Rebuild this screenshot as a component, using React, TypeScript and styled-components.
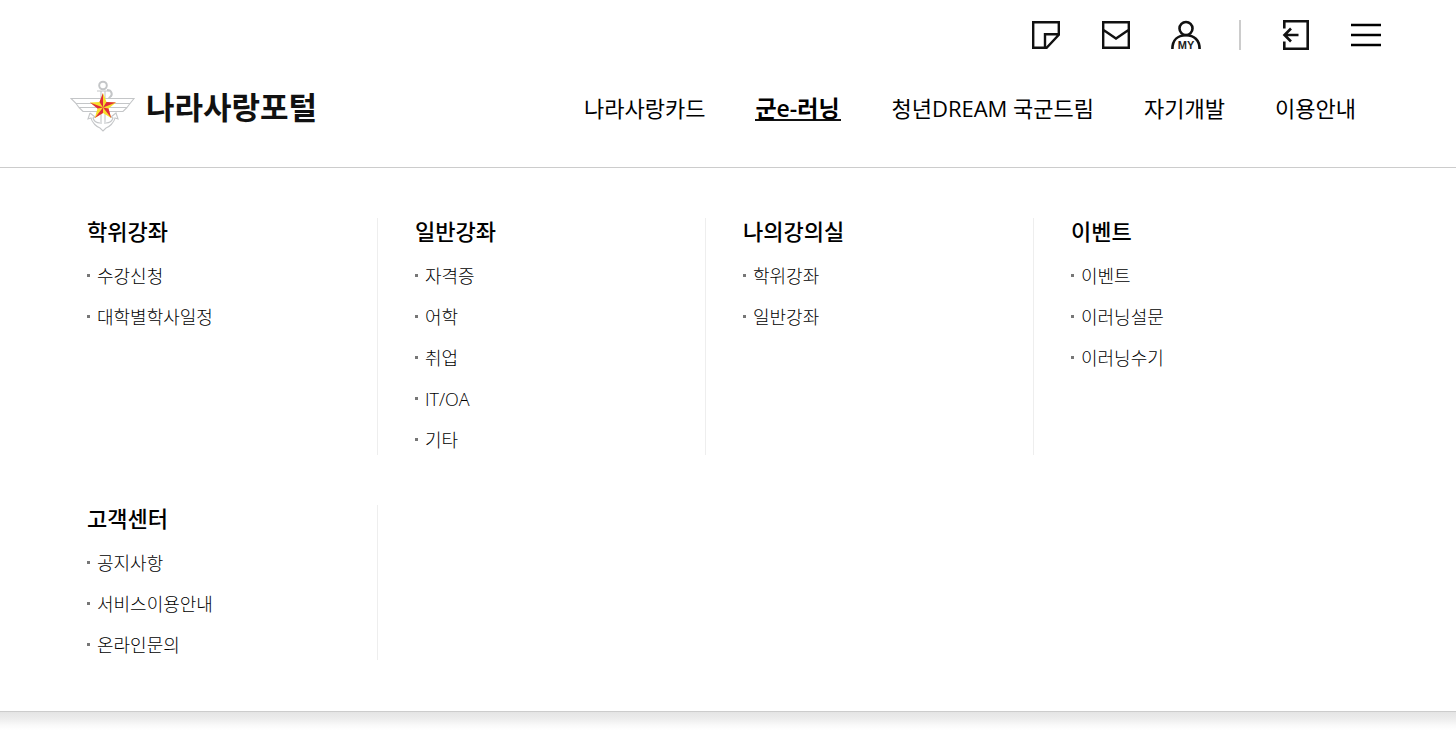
import React from "react";
import styled, { createGlobalStyle, css } from "styled-components";

const GlobalStyle = createGlobalStyle`
  *, *::before, *::after { box-sizing: border-box; }
  body {
    margin: 0;
    background: #fff;
    color: #000;
    font-family: "Open Sans", "Noto Sans CJK KR", sans-serif;
  }
  ul { list-style: none; margin: 0; padding: 0; }
  a { color: inherit; text-decoration: none; }
`;

const Header = styled.header`
  height: 168px;
  border-bottom: 1px solid #ccc;
`;

const UtilityBar = styled.div`
  display: flex;
  justify-content: flex-end;
  align-items: center;
  height: 70px;
  padding-right: 75px;
`;

const IconButton = styled.button`
  width: 30px;
  height: 30px;
  margin-left: 40px;
  padding: 0;
  border: 0;
  background: none;
  cursor: pointer;

  svg { display: block; }
`;

const Divider = styled.span`
  width: 2px;
  height: 30px;
  margin-left: 38px;
  background: #ccc;
`;

const MainBar = styled.div`
  display: flex;
  justify-content: space-between;
  align-items: center;
  height: 76px;
  padding: 0 100px 0 70px;
`;

const Logo = styled.a`
  display: flex;
  align-items: center;
  gap: 10px;
  padding-bottom: 3px;
  color: #111;
  font-size: 31px;
  line-height: 40px;
  font-weight: 700;
  white-space: nowrap;
`;

const NavList = styled.ul`
  display: flex;
  gap: 50px;
`;

const NavLink = styled.a<{ $active?: boolean }>`
  display: block;
  padding-top: 2px;
  font-size: 22px;
  line-height: 22px;
  white-space: nowrap;
  border-bottom: 2px solid transparent;
  ${(p) =>
    p.$active &&
    css`
      min-width: 86px;
      font-size: 23px;
      font-weight: 600;
      border-color: #111;
    `}
`;

const MegaMenu = styled.section`
  display: grid;
  grid-template-columns: repeat(4, 1fr);
  row-gap: 50px;
  padding: 50px 94px 51px 50px;
  border-bottom: 1px solid #ccc;
`;

const MenuShadow = styled.div`
  height: 18px;
  background: linear-gradient(#e4e4e4, #ececec 35%, #fafafa 75%, #fff);
`;

const Column = styled.div<{ $last?: boolean }>`
  padding: 0 20px 2px 37px;
  border-right: 1px solid ${(p) => (p.$last ? "transparent" : "#eee")};
`;

const ColumnTitle = styled.h2`
  margin: 0 0 20px;
  font-size: 22px;
  line-height: 26px;
  font-weight: 500;
`;

const LinkList = styled.ul`
  display: grid;
  gap: 16px;
`;

const LinkItem = styled.li`
  display: flex;
  align-items: center;
  gap: 7px;
  font-size: 18px;
  line-height: 25px;
  font-weight: 300;

  &::before {
    content: "";
    width: 3px;
    height: 3px;
    margin-bottom: 2px;
    background: #777;
  }
`;

const Emblem = () => (
  <svg width="66" height="54" viewBox="0 0 66 54" fill="none" stroke="#c4c6c8" strokeWidth="1.1" aria-hidden="true">
    <circle cx="33" cy="5.500" r="3.800" strokeWidth="2" />
    <path d="M27 11h12M31 11v9M35 11v9" />
    <path d="M37 10c5 0 6 5 3 7s1 6 4 5" strokeWidth="2" />
    <path d="M1 18.500h63l-4 5H6zM6 23.500l3 4h48l3-4M9 27.500l4 4h40l4-4" fill="#fff" />
    <path d="M31 30v14M35 30v14M20 33l-2 6 3-1c1 5 6 9 9 10l3 3 3-3c3-1 8-5 9-10l3 1-2-6-5 4 2 1c-1 3-4 5-7 5M20 33l5 4-2 1c1 3 4 5 7 5" />
    <g stroke="none">
      <path fill="#f6df2b" d="M33 13l3.500 9 9.500.5-7.500 6 2.700 9.500L33 33l-8.200 5 2.700-9.500-7.500-6 9.500-.5z" />
      <path fill="#df2b3b" d="M33 13v14.500L29.500 22zM46 22.500l-13 5 3.500-5.500zM41.200 38L33 27.500l5.500 1zM24.800 38L33 27.500V33zM20 22.500l13 5-5.500 1z" />
    </g>
  </svg>
);

const icon = {
  width: 30,
  height: 30,
  viewBox: "0 0 30 30",
  fill: "none",
  stroke: "#111",
  strokeWidth: 2.4,
  "aria-hidden": true,
} as const;

const NoteIcon = () => (
  <svg {...icon}>
    <path d="M2.200 2.200h25.600v12.600L15.600 27.800H2.200zM14 27.800V14.200h13.800" />
  </svg>
);

const MailIcon = () => (
  <svg {...icon}>
    <path d="M2.200 2.200h25.600v25.600H2.200zM2.500 10L15 18.500 27.500 10" />
  </svg>
);

const MyIcon = () => (
  <svg {...icon} strokeWidth={2.600}>
    <circle cx="15" cy="8.500" r="6.500" />
    <path d="M1.400 29C1.400 20 7 15.300 15 15.300S28.600 20 28.600 29" />
    <text x="15" y="29" textAnchor="middle" fill="#222" stroke="none" fontSize="11" fontWeight="600">
      MY
    </text>
  </svg>
);

const LogoutIcon = () => (
  <svg {...icon} strokeWidth={2.600}>
    <path d="M3.300 8.500V1.300h23.400v27.400H3.300v-7.200M17.500 15H4M10 8.500L3.500 15l6.500 6.500" />
  </svg>
);

const MenuIcon = () => (
  <svg {...icon} stroke="#000" strokeWidth={2.600}>
    <path d="M0 5h30M0 15h30M0 25h30" />
  </svg>
);

const navItems = [
  { label: "나라사랑카드" },
  { label: "군e-러닝", active: true },
  { label: "청년DREAM 국군드림" },
  { label: "자기개발" },
  { label: "이용안내" },
];

const menuColumns = [
  { title: "학위강좌", links: ["수강신청", "대학별학사일정"] },
  { title: "일반강좌", links: ["자격증", "어학", "취업", "IT/OA", "기타"] },
  { title: "나의강의실", links: ["학위강좌", "일반강좌"] },
  { title: "이벤트", links: ["이벤트", "이러닝설문", "이러닝수기"] },
  { title: "고객센터", links: ["공지사항", "서비스이용안내", "온라인문의"] },
];

export default function App() {
  return (
    <>
      <GlobalStyle />
      <Header>
        <UtilityBar>
          <IconButton aria-label="쪽지"><NoteIcon /></IconButton>
          <IconButton aria-label="메일"><MailIcon /></IconButton>
          <IconButton aria-label="마이페이지"><MyIcon /></IconButton>
          <Divider />
          <IconButton aria-label="로그아웃"><LogoutIcon /></IconButton>
          <IconButton aria-label="전체메뉴"><MenuIcon /></IconButton>
        </UtilityBar>
        <MainBar>
          <Logo href="#">
            <Emblem />
            나라사랑포털
          </Logo>
          <nav>
            <NavList>
              {navItems.map((item) => (
                <li key={item.label}>
                  <NavLink href="#" $active={item.active}>{item.label}</NavLink>
                </li>
              ))}
            </NavList>
          </nav>
        </MainBar>
      </Header>
      <MegaMenu>
        {menuColumns.map((column, index) => (
          <Column key={column.title} $last={index % 4 === 3}>
            <ColumnTitle>{column.title}</ColumnTitle>
            <LinkList>
              {column.links.map((link) => (
                <LinkItem key={link}>
                  <a href="#">{link}</a>
                </LinkItem>
              ))}
            </LinkList>
          </Column>
        ))}
      </MegaMenu>
      <MenuShadow />
    </>
  );
}
